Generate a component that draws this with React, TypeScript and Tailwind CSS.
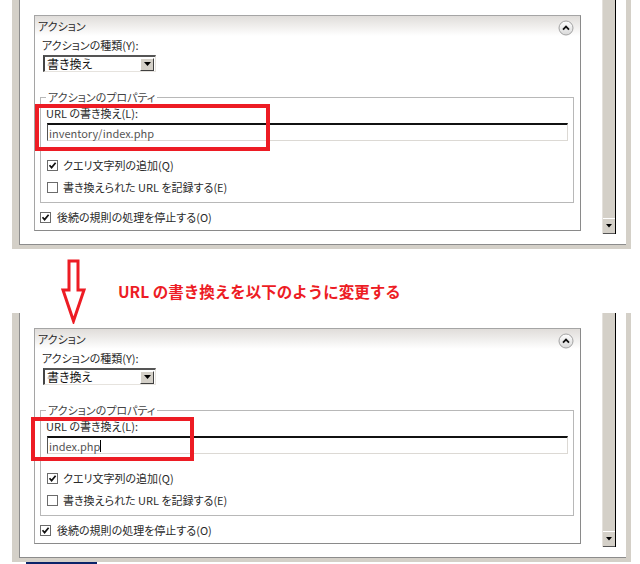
import React from "react";

const RED = "#ed1c24";

const Check = ({ checked }: { checked: boolean }) => (
  <svg width="11" height="11" viewBox="0 0 11 11" className="shrink-0">
    <rect x="0.5" y="0.5" width="10" height="10" fill="#fff" stroke="#6b6b6b" />
    {checked && <path d="M2.5 5.2 L4.6 7.6 L8.6 2.8" fill="none" stroke="#111" strokeWidth="1.7" />}
  </svg>
);

const CollapseButton = () => (
  <svg width="16" height="16" viewBox="0 0 16 16">
    <defs>
      <linearGradient id="cb" x1="0" y1="0" x2="0" y2="1">
        <stop offset="0" stopColor="#ffffff" />
        <stop offset="1" stopColor="#d9d9d9" />
      </linearGradient>
    </defs>
    <circle cx="8" cy="8" r="7" fill="url(#cb)" stroke="#a3a3a3" />
    <path d="M5 9.6 L8 6.6 L11 9.6" fill="none" stroke="#111" strokeWidth="1.8" />
  </svg>
);

const Scrollbar = () => (
  <div className="w-[14px] h-[234px] flex flex-col bg-[#d4d0c8] border-l border-[#e4e1dc] border-r border-r-black">
    <div className="flex-1" />
    <div className="h-[16px] flex items-center justify-center border-t border-t-white border-b border-b-[#555]">
      <svg width="6" height="4" viewBox="0 0 6 4">
        <path d="M0 0 L6 0 L3 3.5 Z" fill="#000" />
      </svg>
    </div>
  </div>
);

type PanelProps = { url: string; caret?: boolean; box: { left: number; width: number; height: number } };

const Panel = ({ url, caret, box }: PanelProps) => (
  <div className="relative w-[547px] h-[216px] border border-[#a5a5a5] border-b-[#8a8a8a] border-r-[#8a8a8a] bg-white text-[11px] leading-[14px] text-[#2a2a2a]">
    <div className="h-[20px] flex items-center justify-between pl-[3px] pr-[6px] bg-linear-to-b from-[#e0ddda] to-white">
      <span>アクション</span>
      <span className="mt-[4px]">
        <CollapseButton />
      </span>
    </div>
    <div className="pl-[7px] mt-[2px]">アクションの種類(Y):</div>
    <div className="ml-[8px] mt-[3px] w-[113px] h-[17px] flex items-center border-t-2 border-l-2 border-t-[#555] border-l-[#444] border-b border-r border-b-[#e6e3de] border-r-[#e6e3de] bg-white">
      <span className="flex-1 pl-[2px] text-[12px] text-[#111]">書き換え</span>
      <span className="w-[14px] h-[13px] mr-[1px] flex items-center justify-center bg-[#d4d0c8] border-t border-l border-white border-b border-r border-b-[#404040] border-r-[#404040]">
        <svg width="7" height="4" viewBox="0 0 7 4">
          <path d="M0 0 L7 0 L3.5 4 Z" fill="#000" />
        </svg>
      </span>
    </div>
    <fieldset className="ml-[5px] mt-[18px] w-[534px] border border-[#b8b8b8] pb-[8px]">
      <legend className="ml-[5px] px-[2px] text-[#444]">アクションのプロパティ</legend>
      <div className="pl-[5px] mt-[2px]">URL の書き換え(L):</div>
      <div className="ml-[6px] mt-[3px] w-[521px] h-[18px] flex items-center border-t-2 border-l border-t-[#111] border-l-[#555] border-b border-r border-b-[#dcd9d4] border-r-[#dcd9d4] bg-white">
        <span className="pl-[1px] text-[#555]">{url}</span>
        {caret && <span className="w-px h-[12px] bg-black" />}
      </div>
      <div className="ml-[6px] mt-[17px] flex items-center gap-[5px]">
        <Check checked />
        <span>クエリ文字列の追加(Q)</span>
      </div>
      <div className="ml-[6px] mt-[8px] flex items-center gap-[5px]">
        <Check checked={false} />
        <span>書き換えられた URL を記録する(E)</span>
      </div>
    </fieldset>
    <div className="ml-[5px] mt-[7px] flex items-center gap-[6px]">
      <Check checked />
      <span>後続の規則の処理を停止する(O)</span>
    </div>
    <div
      className="absolute top-[88px] border-[4px] border-[#ed1c24]"
      style={{ left: box.left, width: box.width, height: box.height }}
    />
  </div>
);

const Frame = (props: PanelProps) => (
  <div className="ml-[12px] w-[619px] h-[249px] flex border-l-[7px] border-r-[5px] border-b-[4px] border-[#d4d0c8]">
    <div className="flex-1 flex items-start border-l border-b border-[#8c8c8c] bg-white">
      <div className="pl-[14px] pt-[15px]">
        <Panel {...props} />
      </div>
      <div className="ml-[21px]">
        <Scrollbar />
      </div>
    </div>
  </div>
);

export default function App() {
  return (
    <div className="w-[640px] h-[564px] overflow-hidden bg-white font-['Noto_Sans_CJK_JP',sans-serif] [font-feature-settings:'palt']">
      <Frame url="inventory/index.php" box={{ left: 0, width: 235, height: 47 }} />
      <div className="h-[64px] flex items-start">
        <svg width="28" height="66" viewBox="0 0 28 66" className="relative z-10 ml-[60px] mt-[9px] shrink-0">
          <polygon
            points="9,3 18,3 18,32 24,32 13.5,63 3,32 9,32"
            fill="#fff"
            stroke={RED}
            strokeWidth="3"
            strokeLinejoin="miter"
          />
        </svg>
        <div className="ml-[30px] mt-[32px] text-[15.5px] leading-[20px] font-bold text-[#ed1c24] [font-feature-settings:normal] whitespace-nowrap">
          URL の書き換えを以下のように変更する
        </div>
      </div>
      <Frame url="index.php" caret box={{ left: -4, width: 163, height: 44 }} />
      <div className="ml-[26px] w-[71px] h-[2px] bg-[#0a246a]" />
    </div>
  );
}
